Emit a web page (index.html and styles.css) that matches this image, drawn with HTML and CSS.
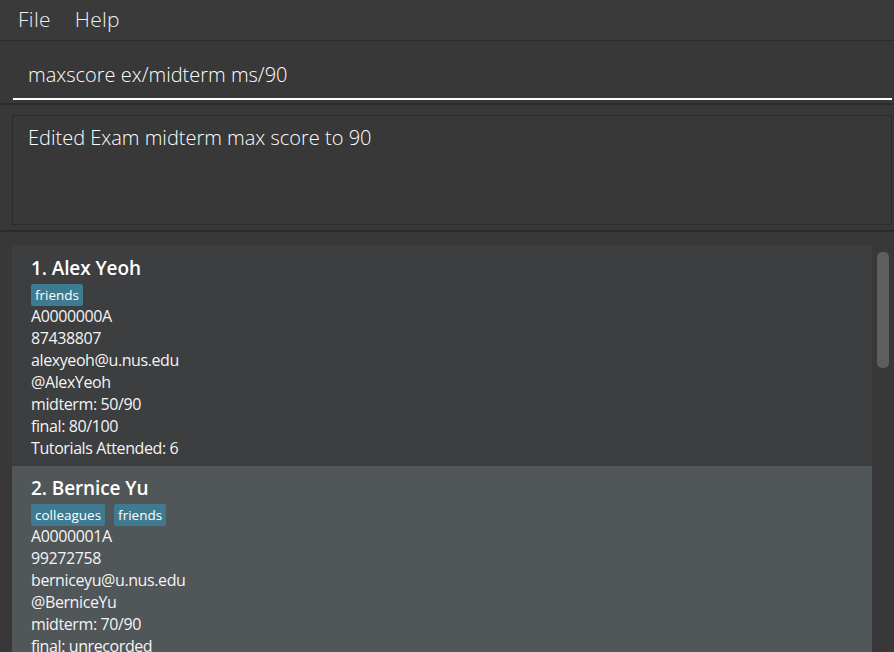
FILE: index.html
```html
<!DOCTYPE html>
<html>
<head>
<meta charset="utf-8">
<link rel="stylesheet" href="styles.css">
</head>
<body>
<div class="app">
  <div class="menubar">
    <span class="menu-item">File</span>
    <span class="menu-item">Help</span>
  </div>
  <div class="command-pane">
    <div class="command-box">maxscore ex/midterm ms/90</div>
  </div>
  <div class="result-pane">
    <div class="result-box">Edited Exam midterm max score to 90</div>
  </div>
  <div class="list-pane">
    <div class="cards">
      <div class="card card-even">
        <div class="name">1. Alex Yeoh</div>
        <div class="tags"><span class="tag">friends</span></div>
        <div class="line">A0000000A</div>
        <div class="line">87438807</div>
        <div class="line">alexyeoh@u.nus.edu</div>
        <div class="line">@AlexYeoh</div>
        <div class="line">midterm: 50/90</div>
        <div class="line">final: 80/100</div>
        <div class="line">Tutorials Attended: 6</div>
      </div>
      <div class="card card-odd">
        <div class="name">2. Bernice Yu</div>
        <div class="tags"><span class="tag">colleagues</span><span class="tag">friends</span></div>
        <div class="line">A0000001A</div>
        <div class="line">99272758</div>
        <div class="line">berniceyu@u.nus.edu</div>
        <div class="line">@BerniceYu</div>
        <div class="line">midterm: 70/90</div>
        <div class="line">final: unrecorded</div>
        <div class="line">Tutorials Attended: 4</div>
      </div>
    </div>
    <div class="scrollbar"><div class="thumb"></div></div>
  </div>
</div>
</body>
</html>
```

FILE: styles.css
```css
html, body {
  margin: 0;
  padding: 0;
}
body {
  background: #383838;
  width: 894px;
  height: 652px;
  overflow: hidden;
  font-family: "Open Sans", "Noto Sans", sans-serif;
  color: #ffffff;
}
.app {
  display: flex;
  flex-direction: column;
  height: 652px;
}
.menubar {
  background: #3a3a3a;
  border-bottom: 1px solid #2c2c2c;
  display: flex;
  align-items: center;
  padding-left: 18px;
  padding-bottom: 3px;
  box-sizing: border-box;
  height: 41px;
  gap: 24px;
  flex-shrink: 0;
}
.menu-item {
  font-size: 21px;
  font-weight: 300;
  color: #f0f0f0;
  letter-spacing: 0.3px;
}
.command-pane {
  height: 64px;
  border-bottom: 2px solid #2b2b2b;
  padding: 0 2px 3px 13px;
  display: flex;
  align-items: flex-end;
  background: #383838;
  box-sizing: border-box;
  flex-shrink: 0;
}
.command-box {
  flex: 1;
  height: 50px;
  border-bottom: 2px solid #ffffff;
  padding-left: 15px;
  padding-top: 2px;
  font-size: 20px;
  font-weight: 300;
  line-height: 46px;
  letter-spacing: 0;
  color: #ffffff;
  box-sizing: border-box;
}
.result-pane {
  height: 127px;
  border-bottom: 2px solid #2b2b2b;
  padding: 10px 2px 0 12px;
  box-sizing: border-box;
  flex-shrink: 0;
}
.result-box {
  height: 110px;
  border: 1px solid #2b2b2b;
  box-sizing: border-box;
  padding: 9px 0 0 15px;
  font-size: 20px;
  font-weight: 300;
  letter-spacing: 0;
  color: #ffffff;
  line-height: 26px;
}
.list-pane {
  flex: 1;
  display: flex;
  padding-top: 14px;
  padding-left: 12px;
  overflow: hidden;
}
.cards {
  width: 860px;
  display: flex;
  flex-direction: column;
}
.card {
  padding: 10px 0 0 19px;
  height: 220px;
  box-sizing: border-box;
  flex-shrink: 0;
}
.card-even {
  background: #3c3e3f;
}
.card-odd {
  background: #515658;
}
.name {
  font-size: 19px;
  font-weight: 600;
  color: #ffffff;
  line-height: 24px;
  letter-spacing: -0.1px;
}
.tags {
  display: flex;
  gap: 9px;
  margin-top: 4px;
  margin-bottom: -1px;
}
.tag {
  background: #3e7b91;
  color: #ffffff;
  font-size: 13.5px;
  line-height: 22px;
  height: 22px;
  padding: 0 4px;
  border-radius: 2px;
}
.line {
  font-size: 16px;
  line-height: 22px;
  color: #f4f4f4;
  letter-spacing: -0.4px;
}
.scrollbar {
  width: 22px;
  background: #383838;
  display: flex;
  justify-content: center;
  padding-top: 6px;
  box-sizing: border-box;
}
.thumb {
  width: 12px;
  height: 116px;
  background: #5e5e5e;
  border-radius: 5px;
}
```
